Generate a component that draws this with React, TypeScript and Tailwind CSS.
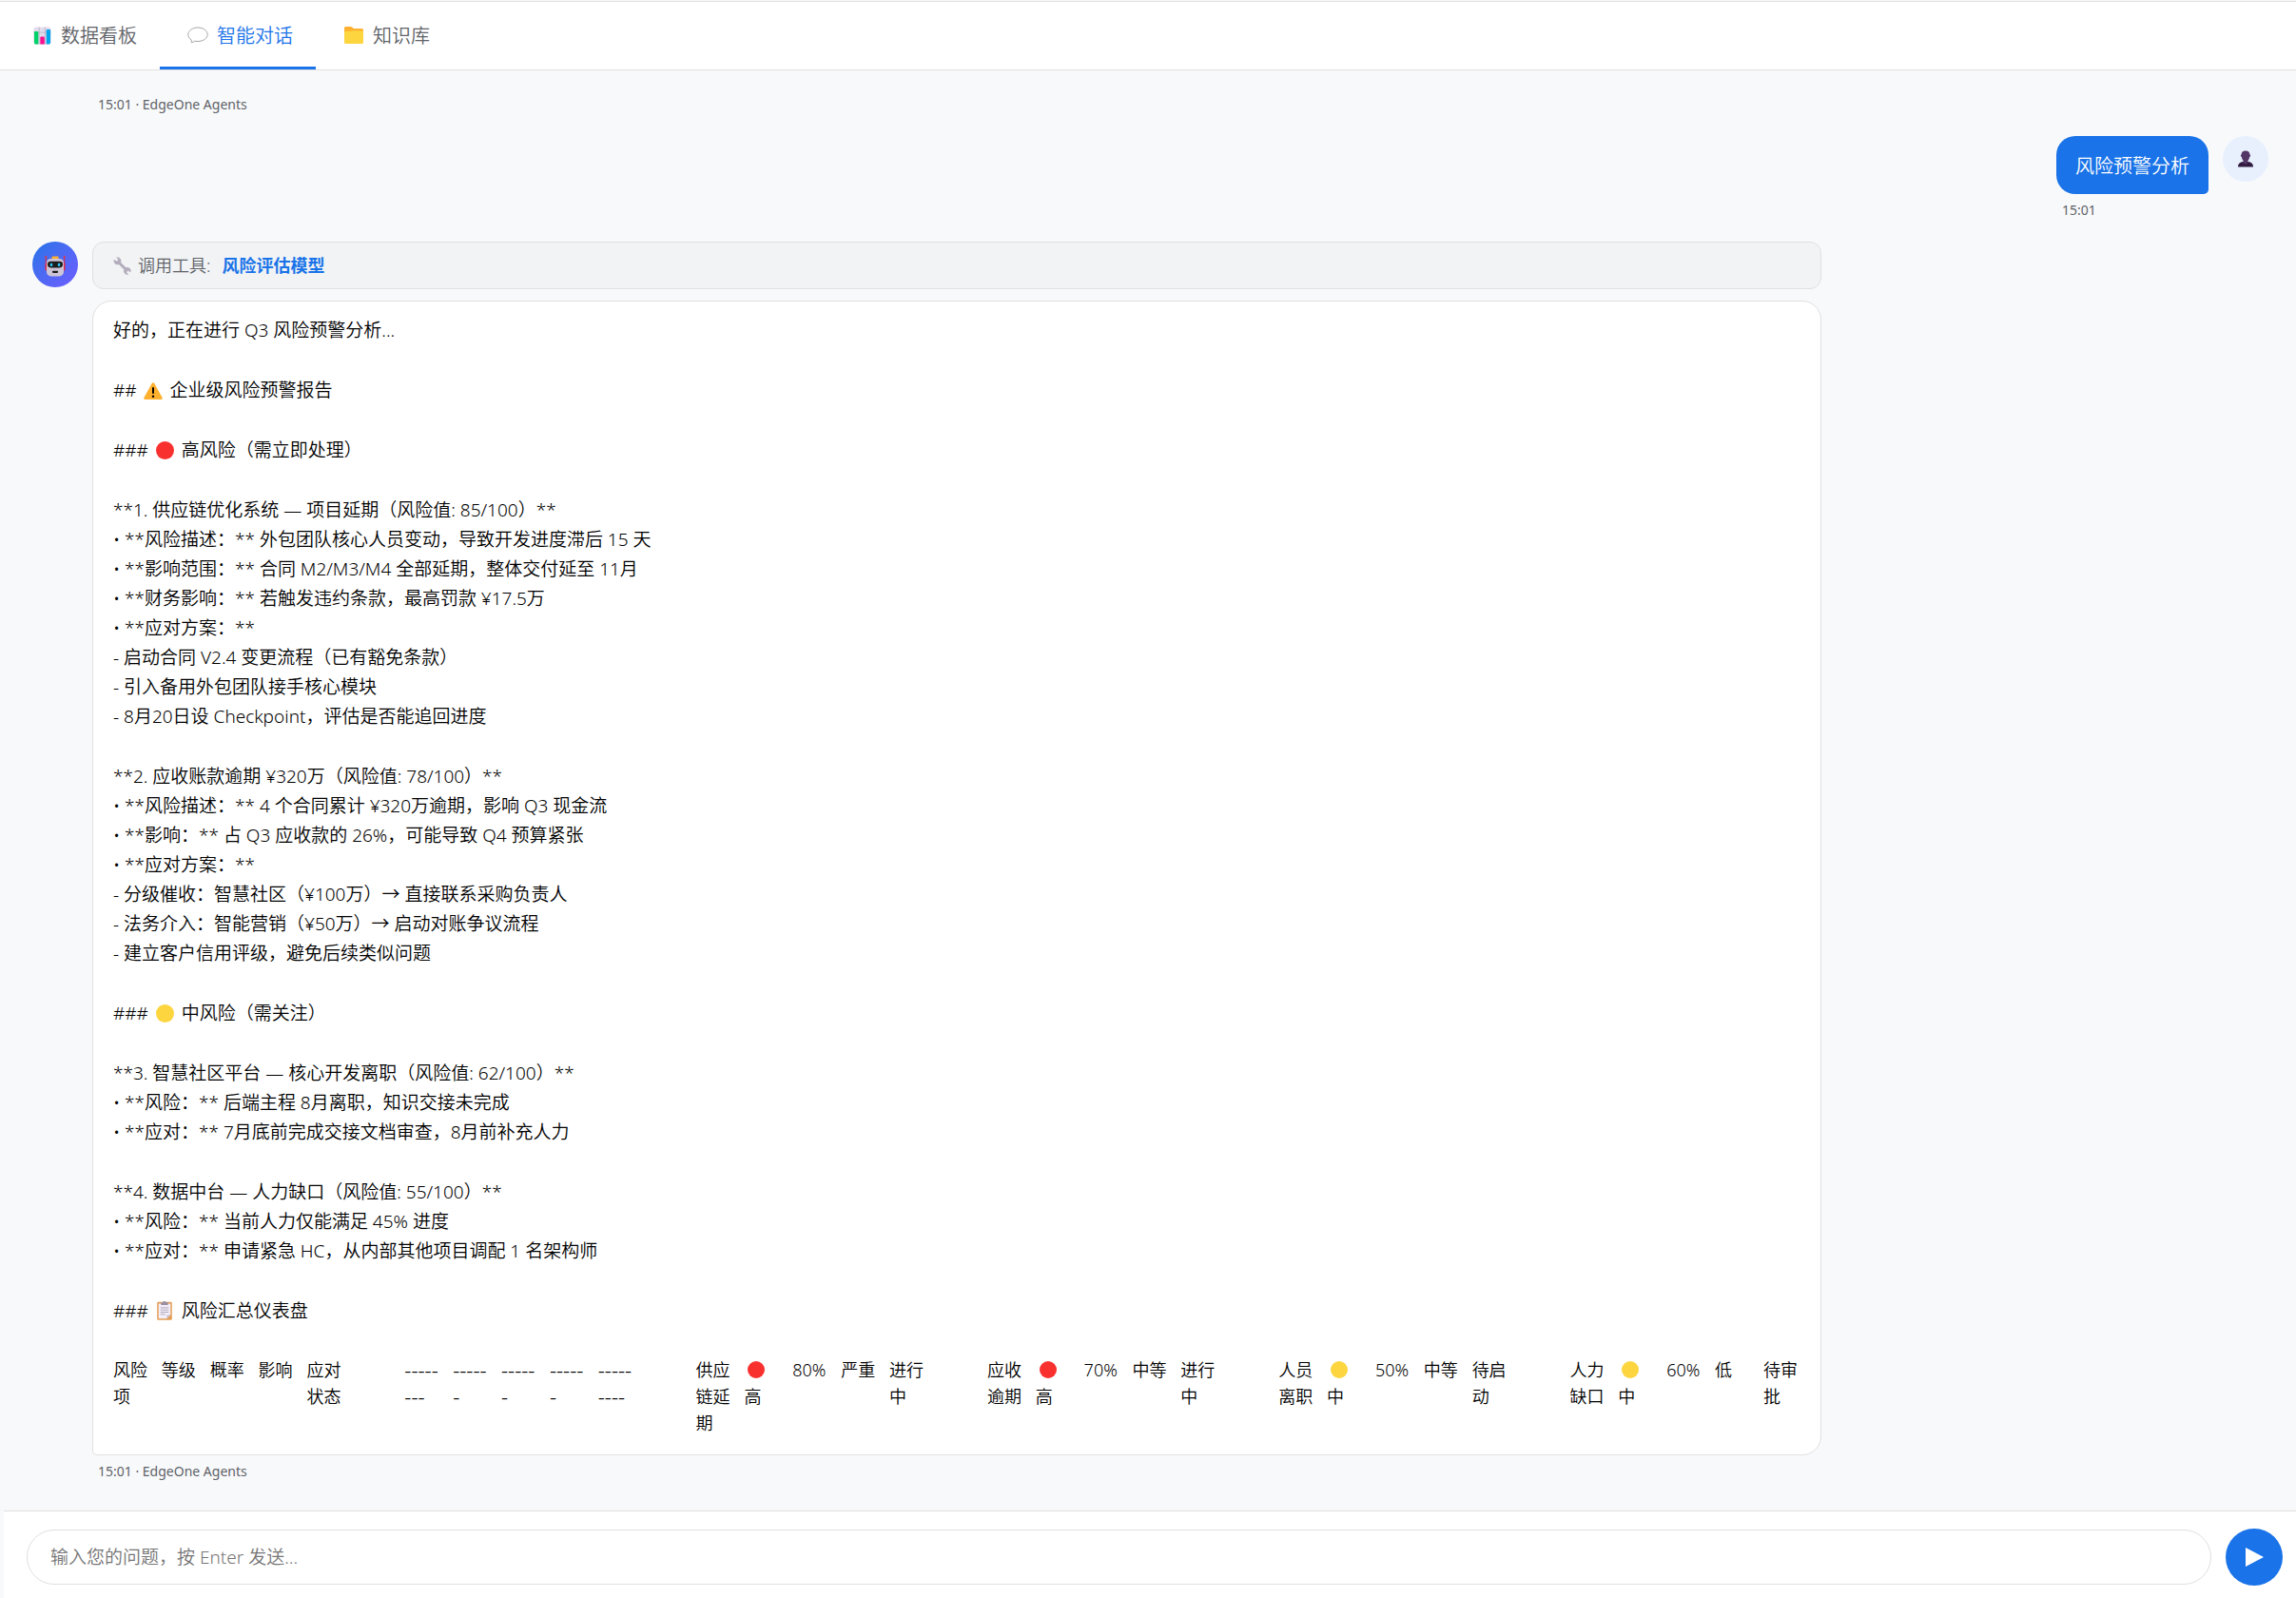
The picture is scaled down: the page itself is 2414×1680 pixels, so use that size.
import React, { useState } from "react";

type IconProps = { className?: string };

const ChartIcon = ({ className = "" }: IconProps) => (
  <svg viewBox="0 0 20 20" className={className} aria-hidden="true">
    <rect x="0.5" y="0.5" width="19" height="19" rx="2.5" fill="#e3dcec" />
    <path d="M6.5 .5v19M13 .5v19M.5 6.5h19" stroke="#b9afc6" strokeWidth="0.8" />
    <path d="M1 6.2a1 1 0 0 1 1-1h2.6a1 1 0 0 1 1 1v13.3H3a2 2 0 0 1-2-2z" fill="#00d26a" />
    <path d="M7.7 12a1 1 0 0 1 1-1h2.7a1 1 0 0 1 1 1v7.5H7.7z" fill="#f8108f" />
    <path d="M14.4 4.2a1 1 0 0 1 1-1H18a1 1 0 0 1 1 1v13.3a2 2 0 0 1-2 2h-2.6z" fill="#00a6ed" />
  </svg>
);

const SpeechIcon = ({ className = "" }: IconProps) => (
  <svg viewBox="0 0 22 18" className={className} aria-hidden="true">
    <path
      d="M11 1C5.3 1 .8 4.2.8 8.3c0 2.4 1.3 4.3 3.4 5.6.3.8.2 1.9-.1 2.8 1.5-.1 2.9-.8 3.7-1.5 1 .2 2.1.3 3.2.3 5.7 0 10.2-3.2 10.2-7.2S16.7 1 11 1z"
      fill="#fff"
      stroke="#a8a8a8"
      strokeWidth="1"
    />
  </svg>
);

const FolderIcon = ({ className = "" }: IconProps) => (
  <svg viewBox="0 0 20 18" className={className} aria-hidden="true">
    <path d="M0 1.5A1.5 1.5 0 0 1 1.5 0h5.3c.6 0 1 .2 1.4.6L9.8 2H18.5A1.5 1.5 0 0 1 20 3.5V10H0z" fill="#ffb02e" />
    <path d="M0 6.2A1.5 1.5 0 0 1 1.5 4.7h5.600c.5 0 .9-.1 1.2-.4h10.2A1.5 1.5 0 0 1 20 5.8v10.7a1.5 1.5 0 0 1-1.5 1.5h-17A1.5 1.5 0 0 1 0 16.5z" fill="#fcd53f" />
  </svg>
);

const UserIcon = ({ className = "" }: IconProps) => (
  <svg viewBox="0 0 16 18" className={className} aria-hidden="true">
    <path d="M0 17.5c0-3.6 2.6-5.7 8-5.7s8 2.1 8 5.7z" fill="#321b41" />
    <path d="M5.6 9.5h4.8v3c0 1.2-1 2-2.4 2s-2.4-.8-2.4-2z" fill="#533566" />
    <path d="M3.6 4.6C3.6 1.9 5.3.5 8 .5s4.4 1.4 4.4 4.1c.6.1.8.5.7 1.1-.1.7-.4 1.1-.9 1.2C11.7 9.8 10.2 11.5 8 11.5S4.3 9.8 3.8 6.9c-.5-.1-.8-.5-.9-1.2-.1-.6.1-1 .7-1.1z" fill="#533566" />
  </svg>
);

const RobotIcon = ({ className = "" }: IconProps) => (
  <svg viewBox="0 0 22 22" className={className} aria-hidden="true">
    <rect x="7.5" y="0.6" width="7" height="3" rx="0.8" fill="#ffb02e" />
    <path d="M1.3 1v9M20.7 1v9" stroke="#e8283c" strokeWidth="1" strokeLinecap="round" />
    <circle cx="1.3" cy="1.2" r="1" fill="#f8312f" />
    <circle cx="20.7" cy="1.2" r="1" fill="#f8312f" />
    <rect x="0.6" y="8" width="2.4" height="7.5" rx="1.2" fill="#e8283c" />
    <rect x="19" y="8" width="2.4" height="7.5" rx="1.2" fill="#e8283c" />
    <rect x="2" y="3" width="18" height="18.4" rx="4.5" fill="#cdc4d6" />
    <rect x="3" y="5.8" width="16" height="6.6" rx="3.3" fill="#1c1c1c" />
    <rect x="5.8" y="7.7" width="2.4" height="3.2" rx="0.7" fill="#26c9fc" />
    <rect x="13.8" y="7.7" width="2.4" height="3.2" rx="0.7" fill="#26c9fc" />
    <rect x="8" y="15.7" width="6" height="2.2" rx="0.8" fill="#1c1c1c" />
  </svg>
);

const WrenchIcon = ({ className = "" }: IconProps) => (
  <svg viewBox="0 0 19 19" className={className} aria-hidden="true">
    <path
      d="M3.6 1C6 .2 8.3 2 8.1 4.4c0 .6-.2 1.1-.4 1.6l5.7 5.6c2.1-.9 4.6.5 4.9 2.8 0 .6 0 1.1-.3 1.6l-1.9-1.5-1.9.6-.4 1.9 2 1.2c-2.4.8-4.6-1-4.5-3.3 0-.6.1-1.1.4-1.5L6 7.7C3.9 8.7 1.3 7.3.9 4.9c0-.6 0-1.2.2-1.7l2.1 1.5 1.8-.5.5-1.9z"
      fill="#b4acbc"
      stroke="#b4acbc"
      strokeWidth="0.6"
    />
  </svg>
);

const WarningIcon = ({ className = "" }: IconProps) => (
  <svg viewBox="0 0 20 18" className={className} aria-hidden="true">
    <path d="M8.9.8c.5-.9 1.7-.9 2.2 0l8.5 15.3c.5.9-.1 1.9-1.1 1.9h-17c-1 0-1.6-1-1.1-1.9z" fill="#ffb02e" />
    <rect x="9" y="4.9" width="2" height="7.2" rx="1" fill="#000" />
    <circle cx="10" cy="14.7" r="1.2" fill="#000" />
  </svg>
);

const ClipboardIcon = ({ className = "" }: IconProps) => (
  <svg viewBox="0 0 16 20" className={className} aria-hidden="true">
    <rect x="0.2" y="0.7" width="15.6" height="19" rx="1.3" fill="#e39d54" />
    <path d="M1.7 2.5h12.6v11.8l-4 4H1.7z" fill="#f3eef8" />
    <path d="M14.3 14.3h-3a1 1 0 0 0-1 1v3z" fill="#cdc4d6" />
    <path d="M4.8 1.2h1.5C6.3.5 7.1 0 8 0s1.7.5 1.7 1.2h1.5c.4 0 .6.3.6.7v1.4c0 .5-.3.8-.8.8H5c-.5 0-.8-.3-.8-.8V1.9c0-.4.2-.7.6-.7z" fill="#998ea4" />
    <path d="M3.7 6.9h8.6M3.7 9.2h8.6M3.7 11.5h8.6M3.7 13.8h5" stroke="#a9a0b3" strokeWidth="0.9" />
  </svg>
);

const RedDot = () => <span className="inline-block size-[19px] rounded-full bg-[#f8312f]" />;
const YellowDot = () => <span className="inline-block size-[19px] rounded-full bg-[#fcd53f]" />;
const Glyph = ({ children }: { children: React.ReactNode }) => (
  <span className="-my-0.5 inline-flex h-5 w-[25px] items-center justify-center align-[-3px]">{children}</span>
);

const tabs = [
  { label: "数据看板", icon: <ChartIcon className="size-[19px]" /> },
  { label: "智能对话", icon: <SpeechIcon className="w-[22px]" /> },
  { label: "知识库", icon: <FolderIcon className="w-5" /> },
];

const report: React.ReactNode[][] = [
  ["好的，正在进行 Q3 风险预警分析..."],
  [<>## <Glyph><WarningIcon className="w-5" /></Glyph> 企业级风险预警报告</>],
  [<>### <Glyph><RedDot /></Glyph> 高风险（需立即处理）</>],
  [
    "**1. 供应链优化系统 — 项目延期（风险值: 85/100）**",
    "• **风险描述：** 外包团队核心人员变动，导致开发进度滞后 15 天",
    "• **影响范围：** 合同 M2/M3/M4 全部延期，整体交付延至 11月",
    "• **财务影响：** 若触发违约条款，最高罚款 ¥17.5万",
    "• **应对方案：**",
    "- 启动合同 V2.4 变更流程（已有豁免条款）",
    "- 引入备用外包团队接手核心模块",
    "- 8月20日设 Checkpoint，评估是否能追回进度",
  ],
  [
    "**2. 应收账款逾期 ¥320万（风险值: 78/100）**",
    "• **风险描述：** 4 个合同累计 ¥320万逾期，影响 Q3 现金流",
    "• **影响：** 占 Q3 应收款的 26%，可能导致 Q4 预算紧张",
    "• **应对方案：**",
    "- 分级催收：智慧社区（¥100万）→ 直接联系采购负责人",
    "- 法务介入：智能营销（¥50万）→ 启动对账争议流程",
    "- 建立客户信用评级，避免后续类似问题",
  ],
  [<>### <Glyph><YellowDot /></Glyph> 中风险（需关注）</>],
  [
    "**3. 智慧社区平台 — 核心开发离职（风险值: 62/100）**",
    "• **风险：** 后端主程 8月离职，知识交接未完成",
    "• **应对：** 7月底前完成交接文档审查，8月前补充人力",
  ],
  [
    "**4. 数据中台 — 人力缺口（风险值: 55/100）**",
    "• **风险：** 当前人力仅能满足 45% 进度",
    "• **应对：** 申请紧急 HC，从内部其他项目调配 1 名架构师",
  ],
  [<>### <Glyph><ClipboardIcon className="h-5" /></Glyph> 风险汇总仪表盘</>],
];

const Level = ({ tone, text }: { tone: "high" | "mid"; text: string }) => (
  <>
    <span className="flex h-7 items-center pl-1">
      <span className={tone === "high" ? "size-[18px] rounded-full bg-[#f8312f]" : "size-[18px] rounded-full bg-[#fcd53f]"} />
    </span>
    {text}
  </>
);

const Dashes = ({ rest }: { rest: string }) => (
  <span className="block text-[22px] leading-7 whitespace-nowrap">
    -----
    <br />
    {rest}
  </span>
);

const summary: React.ReactNode[][] = [
  ["风险项", "等级", "概率", "影响", "应对状态"],
  [<Dashes rest="---" />, <Dashes rest="-" />, <Dashes rest="-" />, <Dashes rest="-" />, <Dashes rest="----" />],
  ["供应链延期", <Level tone="high" text="高" />, "80%", "严重", "进行中"],
  ["应收逾期", <Level tone="high" text="高" />, "70%", "中等", "进行中"],
  ["人员离职", <Level tone="mid" text="中" />, "50%", "中等", "待启动"],
  ["人力缺口", <Level tone="mid" text="中" />, "60%", "低", "待审批"],
];

const Meta = ({ children }: { children: React.ReactNode }) => (
  <p className="px-1.5 text-[14px] leading-[23px] font-normal text-[#5f6368]">{children}</p>
);

export default function App() {
  const [active, setActive] = useState(1);
  const [text, setText] = useState("");

  return (
    <div className="flex min-h-screen flex-col bg-[#f8f9fb] pt-px font-['Noto_Sans','Noto_Sans_CJK_SC',sans-serif] text-[19px] leading-[31px] font-[350] text-black">
      <nav className="flex h-[73px] shrink-0 border-y border-[#e0e0e0] bg-white pl-1">
        {tabs.map((tab, i) => (
          <button
            key={tab.label}
            type="button"
            onClick={() => setActive(i)}
            className={
              i === active
                ? "flex items-center gap-[5px] border-b-3 border-[#1a73e8] pr-6 pl-[26px] pt-0.5 text-[20px] text-[#1a73e8]"
                : "flex items-center gap-[5px] border-b-3 border-transparent pr-6 pl-[26px] pt-0.5 text-[20px] text-[#5f6368]"
            }
          >
            <span className="flex w-7 justify-center">{tab.icon}</span>
            <span className="pl-px">{tab.label}</span>
          </button>
        ))}
      </nav>

      <main className="flex flex-1 flex-col gap-[22px] pt-6 pr-[29px] pb-6 pl-[34px]">
        <div className="pl-[63px]">
          <Meta>15:01 · EdgeOne Agents</Meta>
        </div>

        <section className="flex items-start justify-end gap-[15px]">
          <div className="flex flex-col gap-[5px]">
            <p className="rounded-[20px] rounded-br-[5px] bg-[#1a73e8] px-5 pt-4 pb-3.5 text-[20px] text-white">风险预警分析</p>
            <Meta>15:01</Meta>
          </div>
          <div className="flex size-12 shrink-0 items-center justify-center rounded-full bg-[#e8f0fe]">
            <UserIcon className="w-4" />
          </div>
        </section>

        <section className="flex w-4/5 items-start gap-[15px]">
          <div className="flex size-12 shrink-0 items-center justify-center rounded-full bg-linear-to-br from-[#1a73e8] to-[#6c5cff] pt-1">
            <RobotIcon className="w-[22px]" />
          </div>
          <div className="flex min-w-0 flex-1 flex-col">
            <div className="mb-3 flex h-[50px] items-center rounded-xl border border-[#e0e0e0] bg-[#f1f3f5] px-[21px] text-[18px] text-[#5f6368]">
              <WrenchIcon className="mr-[7px] w-[19px]" />
              调用工具:
              <strong className="ml-3 font-bold text-[#1a73e8]">风险评估模型</strong>
            </div>
            <article className="rounded-[20px] rounded-bl-[5px] border border-[#e0e0e0] bg-white px-[21px] py-[15px]">
              <div className="flex flex-col gap-8">
                {report.map((lines, i) => (
                  <div key={i}>
                    {lines.map((line, j) => (
                      <p key={j}>{line}</p>
                    ))}
                  </div>
                ))}
              </div>
              <table className="mt-8 mb-1 block text-[18px] leading-7">
                <tbody className="grid grid-cols-6 gap-16">
                  {summary.map((row, i) => (
                    <tr key={i} className="grid grid-cols-5 gap-3">
                      {row.map((cell, j) => (
                        <td key={j} className="min-w-0">
                          {cell}
                        </td>
                      ))}
                    </tr>
                  ))}
                </tbody>
              </table>
            </article>
            <div className="mt-[5px]">
              <Meta>15:01 · EdgeOne Agents</Meta>
            </div>
          </div>
        </section>
      </main>

      <form
        onSubmit={(e) => e.preventDefault()}
        className="ml-1 flex shrink-0 items-center gap-[15px] border-t border-[#e0e0e0] bg-white pt-[18px] pr-[14px] pb-[13px] pl-6"
      >
        <input
          type="text"
          aria-label="输入您的问题"
          value={text}
          onChange={(e) => setText(e.target.value)}
          placeholder="输入您的问题，按 Enter 发送..."
          className="h-[58px] min-w-0 flex-1 rounded-full border border-[#e0e0e0] bg-white px-6 outline-none placeholder:text-[#757575]"
        />
        <button type="submit" aria-label="发送" className="flex size-[60px] shrink-0 items-center justify-center rounded-full bg-[#1a73e8]">
          <svg viewBox="0 0 19 20" className="w-[19px]" aria-hidden="true">
            <path d="M0 0 19 10 0 20z" fill="#fff" />
          </svg>
        </button>
      </form>
    </div>
  );
}
